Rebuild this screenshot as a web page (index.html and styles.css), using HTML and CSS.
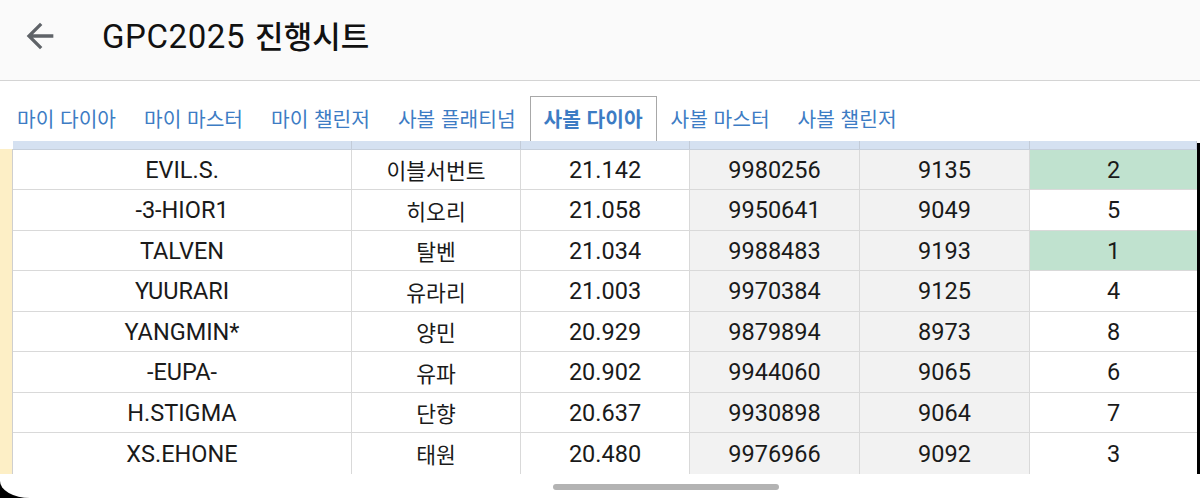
FILE: index.html
```html
<!DOCTYPE html>
<html lang="ko">
<head>
<meta charset="utf-8">
<link rel="stylesheet" href="styles.css">
</head>
<body>
<div class="app">
  <header class="topbar">
    <svg class="back" viewBox="0 0 24 24" width="40" height="40"><path d="M20 11H7.83l5.59-5.59L12 4l-8 8 8 8 1.41-1.41L7.83 13H20v-2z" fill="#5f6368"/></svg>
    <h1 class="title"><span class="lat">GPC2025</span> <span class="kor">진행시트</span></h1>
  </header>
  <nav class="tabs">
    <span class="tab">마이 다이아</span>
    <span class="tab">마이 마스터</span>
    <span class="tab">마이 챌린저</span>
    <span class="tab">사볼 플래티넘</span>
    <span class="tab active">사볼 다이아</span>
    <span class="tab">사볼 마스터</span>
    <span class="tab">사볼 챌린저</span>
  </nav>
  <div class="sheet">
    <div class="gutter"></div>
    <div class="grid">
      <div class="hrow"><span></span><span></span><span></span><span></span><span></span><span></span></div>
      <div class="row"><span>EVIL.S.</span><span class="k">이블서번트</span><span>21.142</span><span class="g">9980256</span><span class="g">9135</span><span class="hi">2</span></div>
      <div class="row"><span>-3-HIOR1</span><span class="k">히오리</span><span>21.058</span><span class="g">9950641</span><span class="g">9049</span><span>5</span></div>
      <div class="row"><span>TALVEN</span><span class="k">탈벤</span><span>21.034</span><span class="g">9988483</span><span class="g">9193</span><span class="hi">1</span></div>
      <div class="row"><span>YUURARI</span><span class="k">유라리</span><span>21.003</span><span class="g">9970384</span><span class="g">9125</span><span>4</span></div>
      <div class="row"><span>YANGMIN*</span><span class="k">양민</span><span>20.929</span><span class="g">9879894</span><span class="g">8973</span><span>8</span></div>
      <div class="row"><span>-EUPA-</span><span class="k">유파</span><span>20.902</span><span class="g">9944060</span><span class="g">9065</span><span>6</span></div>
      <div class="row"><span>H.STIGMA</span><span class="k">단향</span><span>20.637</span><span class="g">9930898</span><span class="g">9064</span><span>7</span></div>
      <div class="row last"><span>XS.EHONE</span><span class="k">태원</span><span>20.480</span><span class="g">9976966</span><span class="g">9092</span><span>3</span></div>
    </div>
    <div class="edge"></div>
  </div>
  <div class="bottom">
    <div class="scroll"></div>
  </div>
</div>
</body>
</html>
```

FILE: styles.css
```css
html, body {
  margin: 0;
  padding: 0;
  background: #000;
}
.app {
  width: 1200px;
  height: 498px;
  background: #fff;
  overflow: hidden;
  border-bottom-left-radius: 30px 17px;
  font-family: Roboto, "Noto Sans CJK KR", sans-serif;
  color: #1f1f1f;
}
.topbar {
  height: 81px;
  box-sizing: border-box;
  border-bottom: 1px solid #d4d4d4;
  background: #fafafa;
  display: flex;
  align-items: center;
  box-shadow: 0 1px 1px rgba(0,0,0,0.05);
}
.back {
  margin-left: 20px;
  margin-top: -8px;
}
.title {
  margin: 0 0 0 42px;
  margin-top: -11px;
  font-weight: 400;
  color: #111;
  white-space: nowrap;
}
.title .lat {
  font-family: Roboto, sans-serif;
  font-size: 33px;
  letter-spacing: 0.6px;
}
.title .kor {
  font-family: "Noto Sans CJK KR", sans-serif;
  font-size: 31px;
  font-weight: 500;
  margin-left: 2px;
}
.tabs {
  height: 60px;
  box-sizing: border-box;
  display: flex;
  align-items: flex-end;
  padding-left: 3px;
  background: #fff;
}
.tab {
  height: 45px;
  box-sizing: border-box;
  display: flex;
  align-items: center;
  padding: 0 13px 2px;
  font-family: "Noto Sans CJK KR", sans-serif;
  font-size: 20.3px;
  color: #3d7cc4;
  border: 1px solid transparent;
  border-bottom: none;
  white-space: nowrap;
}
.tab.active {
  font-weight: 700;
  border-color: #a8a8a8;
}
.sheet {
  display: flex;
  height: 333px;
}
.gutter {
  width: 13px;
  background: #fdefc6;
  border-right: 1px solid #cfcfcf;
  box-sizing: border-box;
  margin-top: 8px;
}
.grid {
  width: 1184px;
  display: flex;
  flex-direction: column;
}
.hrow, .row {
  display: grid;
  grid-template-columns: 339px 169px 169px 170px 170px 167px;
}
.hrow {
  height: 8px;
  background: #d5e1f1;
  border-bottom: 1px solid #c6cfdb;
}
.hrow span {
  border-right: 1px solid #c2cbd8;
}
.row {
  height: 40.6px;
  box-sizing: border-box;
  border-bottom: 1px solid #d9d9d9;
}
.row.last {
  border-bottom: none;
}
.row span {
  display: flex;
  align-items: center;
  justify-content: center;
  font-size: 23.5px;
  color: #1a1a1a;
  border-right: 1px solid #d9d9d9;
  font-family: Roboto, "Noto Sans CJK KR", sans-serif;
}
.row span.k {
  font-family: "Noto Sans CJK KR", sans-serif;
  font-size: 21.5px;
}
.row span.g {
  background: #f2f2f2;
}
.row span.hi {
  background: #c0e2cf;
}
.row span:last-child {
  border-right: none;
}
.edge {
  width: 3px;
  background: #000;
  margin-top: 2px;
}
.bottom {
  height: 24px;
  position: relative;
}
.scroll {
  position: absolute;
  left: 553px;
  top: 10px;
  width: 226px;
  height: 6px;
  border-radius: 3px;
  background: #b3b3b3;
}
```
